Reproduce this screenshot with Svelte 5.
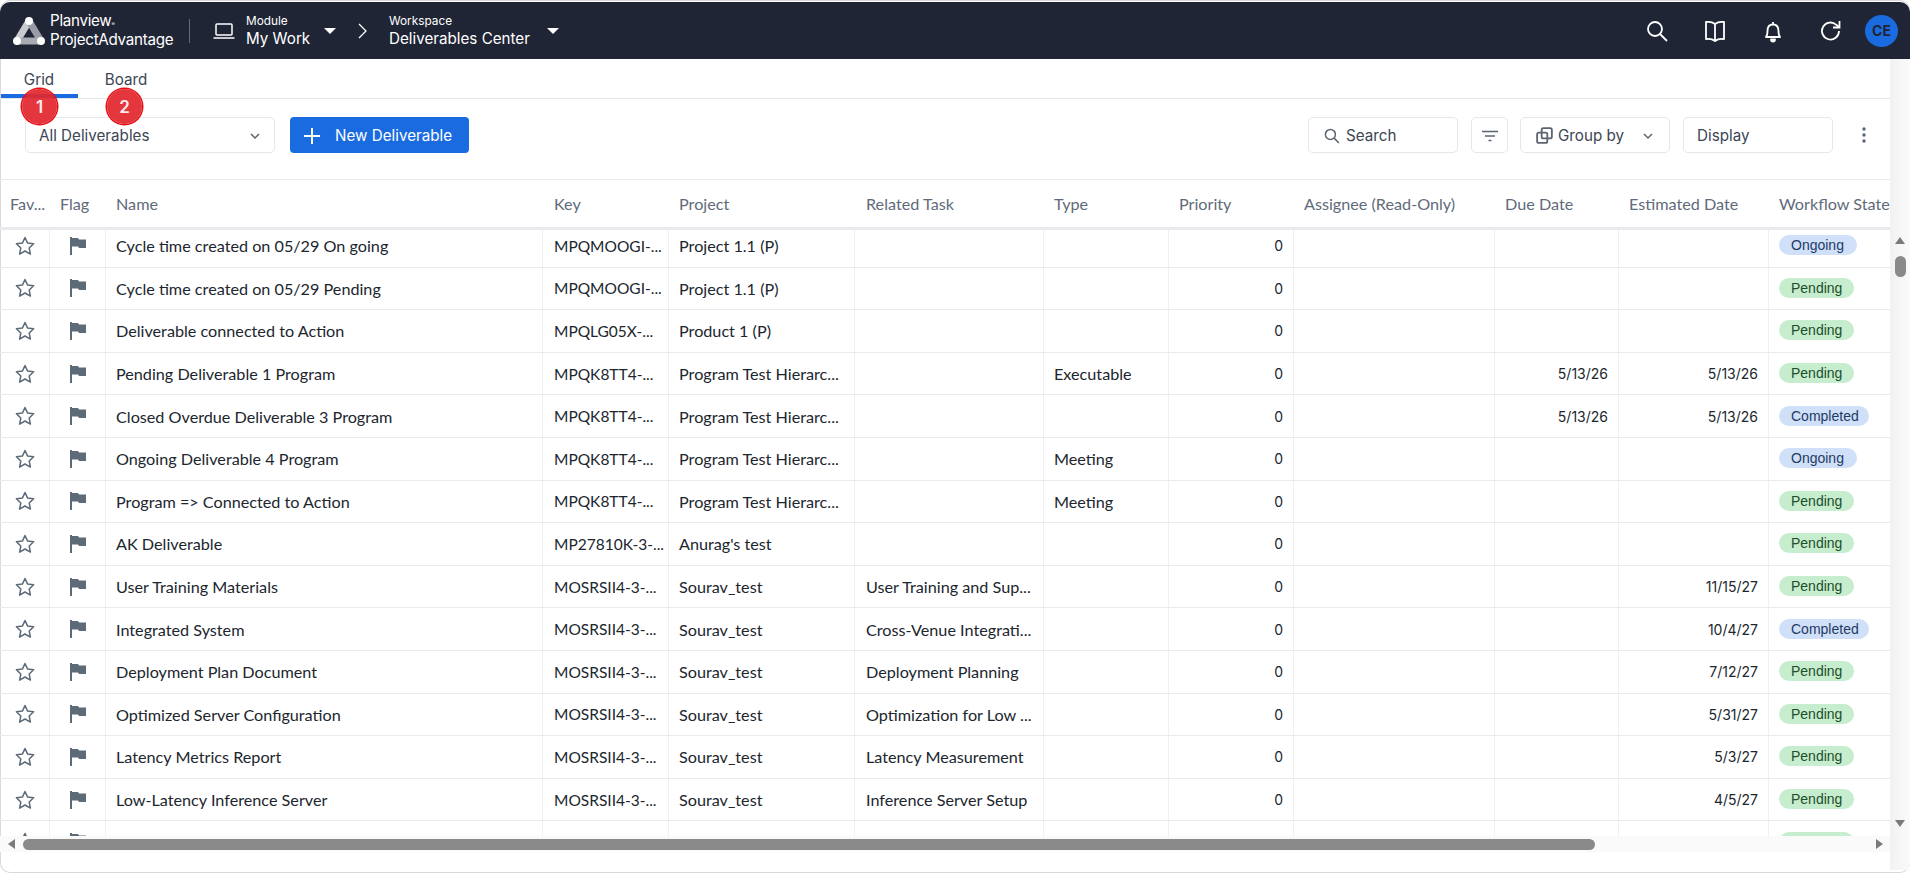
<script>
  const cols = [
    { k: 'fav', label: 'Fav...', w: 50 },
    { k: 'flag', label: 'Flag', w: 56 },
    { k: 'name', label: 'Name', w: 437 },
    { k: 'key', label: 'Key', w: 126 },
    { k: 'project', label: 'Project', w: 186 },
    { k: 'task', label: 'Related Task', w: 189 },
    { k: 'type', label: 'Type', w: 125 },
    { k: 'priority', label: 'Priority', w: 125 },
    { k: 'assignee', label: 'Assignee (Read-Only)', w: 201 },
    { k: 'due', label: 'Due Date', w: 124 },
    { k: 'est', label: 'Estimated Date', w: 150 },
    { k: 'state', label: 'Workflow State Value', w: 160 }
  ];
  const r = (name, key, project, task, type, due, est, state) => ({ name, key, project, task, type, due, est, state });
  const rows = [
    r('Cycle time created on 05/29 On going', 'MPQMOOGI-...', 'Project 1.1 (P)', '', '', '', '', 'Ongoing'),
    r('Cycle time created on 05/29 Pending', 'MPQMOOGI-...', 'Project 1.1 (P)', '', '', '', '', 'Pending'),
    r('Deliverable connected to Action', 'MPQLG05X-...', 'Product 1 (P)', '', '', '', '', 'Pending'),
    r('Pending Deliverable 1 Program', 'MPQK8TT4-...', 'Program Test Hierarc...', '', 'Executable', '5/13/26', '5/13/26', 'Pending'),
    r('Closed Overdue Deliverable 3 Program', 'MPQK8TT4-...', 'Program Test Hierarc...', '', '', '5/13/26', '5/13/26', 'Completed'),
    r('Ongoing Deliverable 4 Program', 'MPQK8TT4-...', 'Program Test Hierarc...', '', 'Meeting', '', '', 'Ongoing'),
    r('Program => Connected to Action', 'MPQK8TT4-...', 'Program Test Hierarc...', '', 'Meeting', '', '', 'Pending'),
    r('AK Deliverable', 'MP27810K-3-...', "Anurag's test", '', '', '', '', 'Pending'),
    r('User Training Materials', 'MOSRSII4-3-...', 'Sourav_test', 'User Training and Sup...', '', '', '11/15/27', 'Pending'),
    r('Integrated System', 'MOSRSII4-3-...', 'Sourav_test', 'Cross-Venue Integrati...', '', '', '10/4/27', 'Completed'),
    r('Deployment Plan Document', 'MOSRSII4-3-...', 'Sourav_test', 'Deployment Planning', '', '', '7/12/27', 'Pending'),
    r('Optimized Server Configuration', 'MOSRSII4-3-...', 'Sourav_test', 'Optimization for Low ...', '', '', '5/31/27', 'Pending'),
    r('Latency Metrics Report', 'MOSRSII4-3-...', 'Sourav_test', 'Latency Measurement', '', '', '5/3/27', 'Pending'),
    r('Low-Latency Inference Server', 'MOSRSII4-3-...', 'Sourav_test', 'Inference Server Setup', '', '', '4/5/27', 'Pending'),
    r('', '', '', '', '', '', '', 'Pending')
  ];
  const template = cols.map((c) => c.w + 'px').join(' ');
</script>

<div class="page">
  <header class="top">
    <div class="logo">
      <svg width="34" height="30" viewBox="0 0 34 30" fill="none" stroke-width="7">
        <path d="M5 25 L17 5" stroke="#c9cbd1" />
        <path d="M17 5 L29 25" stroke="#9a9da5" />
        <path d="M5 25 H29" stroke="#a9abb2" />
        <circle cx="17" cy="5" r="4" fill="#fff" stroke="none" />
        <circle cx="5" cy="25" r="4" fill="#fff" stroke="none" />
        <circle cx="29" cy="25" r="4" fill="#fff" stroke="none" />
      </svg>
      <div class="logotext"><span>Planview<small>®</small></span><span>ProjectAdvantage</span></div>
    </div>
    <span class="vsep"></span>
    <svg class="laptop" width="22" height="18" viewBox="0 0 22 18" fill="none" stroke="#fff" stroke-width="1.5"><rect x="3" y="2" width="16" height="11" rx="1" /><path d="M0.500 16h21" /></svg>
    <div class="crumb mod"><small>Module</small><span>My Work</span></div>
    <span class="caret"></span>
    <svg class="chev" width="12" height="18" viewBox="0 0 12 18" fill="none" stroke="#fff" stroke-width="1.3"><path d="M2 2l7 7-7 7" /></svg>
    <div class="crumb ws"><small>Workspace</small><span>Deliverables Center</span></div>
    <span class="caret"></span>
    <div class="actions">
      <svg width="24" height="24" viewBox="0 0 24 24" fill="none" stroke="#fff" stroke-width="1.8"><circle cx="10" cy="10" r="7" /><path d="M15 15l7 7" /></svg>
      <svg width="24" height="24" viewBox="0 0 24 24" fill="none" stroke="#fff" stroke-width="1.8" stroke-linejoin="round"><path d="M12 5C9.500 3 6 2.500 3 3v17c3-.5 6.500 0 9 2 2.500-2 6-2.500 9-2V3c-3-.5-6.500 0-9 2zM12 5v17" /></svg>
      <svg width="24" height="24" viewBox="0 0 24 24" fill="none" stroke="#fff" stroke-width="1.8" stroke-linejoin="round"><path d="M5 18c1.500-1.500 1.500-3 1.500-6 0-4 2-6.500 5.500-6.500s5.500 2.500 5.500 6.500c0 3 0 4.500 1.500 6zM12 3v2.500" /><path d="M10 20.500a2 2 0 0 0 4 0z" fill="#fff" /></svg>
      <svg width="24" height="24" viewBox="0 0 24 24" fill="none" stroke="#fff" stroke-width="1.8"><path d="M20 12a8.500 8.500 0 1 1-2.700-6.200L20 8" /><path d="M20.500 2v6.500H14" /></svg>
      <span class="avatar">CE</span>
    </div>
  </header>

  <div class="content">
    <div class="main">
      <nav class="tabs">
        <span class="tab on">Grid</span>
        <span class="tab">Board</span>
        <span class="pin p1">1</span>
        <span class="pin p2">2</span>
      </nav>

      <div class="toolbar">
        <div class="box select"><span>All Deliverables</span><svg width="12" height="12" viewBox="0 0 12 12" fill="none" stroke="#5b6472" stroke-width="1.5"><path d="M2 4l4 4 4-4" /></svg></div>
        <button class="newbtn"><svg width="16" height="16" viewBox="0 0 16 16" stroke="#fff" stroke-width="2"><path d="M8 0v16M0 8h16" /></svg>New Deliverable</button>
        <div class="spacer"></div>
        <div class="box search"><svg width="16" height="16" viewBox="0 0 15 15" fill="none" stroke="#5b6472" stroke-width="1.4"><circle cx="6" cy="6" r="4.700" /><path d="M9.500 9.500l4.500 4.500" /></svg><span>Search</span></div>
        <div class="box filter"><svg width="16" height="12" viewBox="0 0 16 12" fill="none" stroke="#5b6472" stroke-width="1.500"><path d="M0 1.500h16M3 6h10M6.500 10.500h3" /></svg></div>
        <div class="box group"><svg width="17" height="17" viewBox="0 0 15 15" fill="none" stroke="#5b6472" stroke-width="1.600"><rect x="1" y="5" width="9" height="9" rx="1.500" /><rect x="5" y="1" width="9" height="9" rx="1.500" /></svg><span>Group by</span><svg class="gchev" width="12" height="12" viewBox="0 0 12 12" fill="none" stroke="#5b6472" stroke-width="1.5"><path d="M2 4l4 4 4-4" /></svg></div>
        <div class="box display"><span>Display</span></div>
        <svg class="more" width="4" height="16" viewBox="0 0 4 16" fill="#5b6472"><circle cx="2" cy="2" r="1.700" /><circle cx="2" cy="8" r="1.700" /><circle cx="2" cy="14" r="1.700" /></svg>
      </div>

      <div class="head" style="grid-template-columns:{template}">
        {#each cols as c}<div class="hc">{c.label}</div>{/each}
      </div>
      <div class="body">
        {#each rows as row}
          <div class="row" style="grid-template-columns:{template}">
            <div class="c icon"><svg width="20" height="20" viewBox="0 0 20 20" fill="none" stroke="#5d6a78" stroke-width="1.500" stroke-linejoin="round"><path d="M10 1.500l2.600 5.600 6 .7-4.400 4.200 1.200 6.100L10 15l-5.400 3.100 1.200-6.100L1.400 7.800l6-.7z" /></svg></div>
            <div class="c icon"><svg width="16" height="18" viewBox="0 0 16 18" fill="#5d6a78"><path d="M0 0h2v18H0zM2 1h6l1 1.500h7V11H9L8 9.500H2z" /></svg></div>
            <div class="c">{row.name}</div>
            <div class="c key">{row.key}</div>
            <div class="c">{row.project}</div>
            <div class="c task">{row.task}</div>
            <div class="c">{row.type}</div>
            <div class="c num">{row.name ? '0' : ''}</div>
            <div class="c"></div>
            <div class="c num">{row.due}</div>
            <div class="c num">{row.est}</div>
            <div class="c st"><span class="chip {row.state.toLowerCase()}">{row.state}</span></div>
          </div>
        {/each}
      </div>
      <div class="hbar">
        <span class="left"></span>
        <span class="hthumb"></span>
        <span class="right"></span>
      </div>
    </div>
    <div class="rail">
      <span class="up"></span>
      <span class="vthumb"></span>
      <span class="down"></span>
    </div>
  </div>
</div>

<style>
  :global(body) { margin: 0; background: #fff; font-family: Inter, "Liberation Sans", sans-serif; overflow: hidden; }
  .page { position: relative; width: 1910px; height: 873px; overflow: hidden; display: flex; flex-direction: column; background: #fff; box-shadow: inset 0 0 0 1px #d9d9d9; border-radius: 10px; }
  .top { margin-top: 2px; height: 57px; flex: none; background: #1f2535; display: flex; align-items: center; color: #fff; padding-left: 12px; box-sizing: border-box; border-radius: 10px 10px 0 0; }
  .logo { display: flex; align-items: center; gap: 4px; width: 175px; }
  .logotext { display: flex; flex-direction: column; font-size: 15.2px; line-height: 15px; letter-spacing: -0.3px; padding-bottom: 2px; }
  .logotext small { font-size: 5px; }
  .vsep { width: 1px; height: 24px; background: #666b78; margin: 0 23px 0 2px; }
  .laptop { margin-right: 11px; }
  .crumb { display: flex; flex-direction: column; padding-top: 2px; }
  .crumb small { font-size: 11.8px; line-height: 14px; }
  .crumb span { font-size: 15.2px; line-height: 20px; margin-top: 1px; white-space: nowrap; }
  .mod { width: 78px; }
  .caret { width: 0; height: 0; border-left: 6px solid transparent; border-right: 6px solid transparent; border-top: 6px solid #fff; }
  .chev { margin: 0 20px 0 21px; }
  .ws { width: 158px; }
  .actions { margin-left: auto; display: flex; align-items: center; gap: 34px; padding-right: 12px; }
  .avatar { width: 33px; height: 32px; border-radius: 50%; background: #1a6be0; color: #1f2535; font-size: 14px; font-weight: 700; display: flex; align-items: center; justify-content: center; margin-left: -12px; }

  .content { flex: 1; display: flex; min-height: 0; }
  .main { width: 1890px; flex: none; display: flex; flex-direction: column; overflow: hidden; }
  .rail { position: relative; flex: 1; margin-bottom: 3px; background: linear-gradient(90deg, #f1f1f1, #fbfbfb); }
  .up { position: absolute; left: 5px; top: 178px; border-bottom: 7px solid #7b7b7b; border-left: 5px solid transparent; border-right: 5px solid transparent; }
  .down { position: absolute; left: 5px; top: 761px; border-top: 7px solid #7b7b7b; border-left: 5px solid transparent; border-right: 5px solid transparent; }
  .vthumb { position: absolute; left: 5px; top: 197px; width: 11px; height: 21px; border-radius: 6px; background: #8a8a8a; }

  .tabs { position: relative; height: 39px; flex: none; border-bottom: 1px solid #e3e6ea; display: flex; }
  .tab { display: flex; align-items: center; justify-content: center; font-size: 15.2px; color: #3c4654; height: 38px; padding-top: 2px; box-sizing: border-box; }
  .tab:nth-child(1) { width: 78px; }
  .tab:nth-child(2) { width: 96px; }
  .tab.on::after { content: ""; position: absolute; left: 1px; top: 35px; width: 77px; height: 4px; background: #1a6be0; }
  .pin { position: absolute; z-index: 3; top: 30px; width: 35px; height: 35px; border-radius: 50%; background: rgba(226, 40, 46, .93); box-shadow: 0 0 0 1.5px #e80f14; color: #fdeaea; font-size: 17px; font-weight: 600; display: flex; align-items: center; justify-content: center; }
  .p1 { left: 22px; }
  .p2 { left: 107px; }

  .toolbar { height: 81px; flex: none; box-sizing: border-box; padding: 18px 24px 26px 25px; display: flex; align-items: stretch; border-bottom: 1px solid #e8eaed; }
  .box { border: 1px solid #e5e7eb; border-radius: 5px; box-sizing: border-box; display: flex; align-items: center; font-size: 15.2px; color: #3c4654; background: #fff; padding-top: 1px; }
  .select { width: 250px; padding: 1px 13px 0; justify-content: space-between; }
  .newbtn { margin-left: 15px; width: 179px; background: #1a6be0; color: #fff; border: 0; border-radius: 4px; font: inherit; font-size: 15.2px; display: flex; align-items: center; gap: 15px; padding: 1px 0 0 14px; }
  .spacer { flex: 1; }
  .search { width: 150px; padding: 1px 15px 0; gap: 6px; }
  .filter { width: 37px; justify-content: center; margin-left: 13px; }
  .group { width: 150px; margin-left: 12px; padding: 1px 15px 0; gap: 5px; }
  .gchev { margin-left: auto; }
  .display { width: 150px; margin-left: 13px; padding: 1px 13px 0; }
  .more { align-self: center; margin-left: 29px; }

  .head { display: grid; height: 45px; flex: none; border-bottom: 3px solid #e8eaed; padding-top: 2px; box-sizing: content-box; }
  .hc { display: flex; align-items: center; padding: 0 0 2px 10px; font-family: Lato, "Liberation Sans", sans-serif; font-size: 16.2px; color: #5f6b7a; white-space: nowrap; overflow: hidden; }
  .hc:nth-child(4), .hc:nth-child(6) { padding-left: 11px; }
  .body { height: 606px; flex: none; overflow: hidden; }
  .row { display: grid; height: 42.600px; box-sizing: border-box; border-bottom: 1px solid #e8eaed; }
  .row:first-child { margin-top: -5px; }
  .c { display: flex; align-items: center; padding: 0 10px; font-family: Lato, "Liberation Sans", sans-serif; font-size: 16.2px; color: #20262e; border-right: 1px solid #eef0f2; white-space: nowrap; overflow: hidden; box-sizing: border-box; }
  .key { font-size: 15.500px; padding-left: 11px; }
  .task { padding-left: 11px; }
  .icon { justify-content: center; padding: 0; }
  .num { justify-content: flex-end; font-family: Inter, "Liberation Sans", sans-serif; font-size: 14px; }
  .st { padding: 0 0 0 10px; border-right: 0; }
  .chip { height: 20px; border-radius: 10px; padding: 0 13px; font-family: "Liberation Sans", sans-serif; font-size: 14px; display: flex; align-items: center; margin-top: -1px; box-sizing: border-box; }
  .pending { background: #c6edcd; color: #1d4d2b; width: 75px; padding: 0 12px; }
  .ongoing { background: #cfe0f8; color: #1f3a66; width: 78px; padding: 0 12px; }
  .completed { background: #cfe0f8; color: #1f3a66; padding: 0 12px; width: 90px; }
  .hbar { position: relative; height: 16px; flex: none; background: #fafafa; }
  .hthumb { position: absolute; left: 23px; width: 1572px; top: 3px; height: 11px; background: #8a8a8a; border-radius: 6px; }
  .left { position: absolute; left: 8px; top: 3px; border-right: 7px solid #7b7b7b; border-top: 5px solid transparent; border-bottom: 5px solid transparent; }
  .right { position: absolute; left: 1876px; top: 3px; border-left: 7px solid #7b7b7b; border-top: 5px solid transparent; border-bottom: 5px solid transparent; }
</style>
